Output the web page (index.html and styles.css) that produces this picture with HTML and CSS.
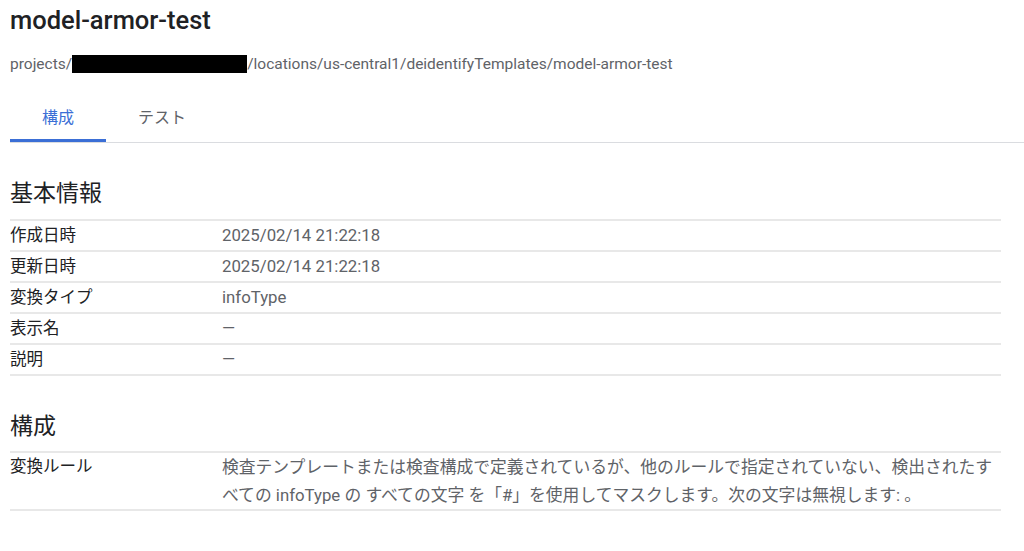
FILE: index.html
```html
<!DOCTYPE html>
<html lang="ja">
<head>
    <meta charset="UTF-8">
    <meta name="viewport" content="width=device-width, initial-scale=1.0">
    <title>model-armor-test</title>
    <link rel="stylesheet" href="styles.css">
</head>
<body>
    <div class="page">
        <h1 class="title">model-armor-test</h1>
        <div class="resource-path">projects/<span class="redacted"></span>/locations/us-central1/deidentifyTemplates/model-armor-test</div>

        <div class="tabs">
            <div class="tab active">構成</div>
            <div class="tab">テスト</div>
        </div>

        <section class="section">
            <h2 class="section-title">基本情報</h2>
            <div class="kv">
                <div class="kv-row"><div class="kv-label">作成日時</div><div class="kv-value">2025/02/14 21:22:18</div></div>
                <div class="kv-row"><div class="kv-label">更新日時</div><div class="kv-value">2025/02/14 21:22:18</div></div>
                <div class="kv-row"><div class="kv-label">変換タイプ</div><div class="kv-value">infoType</div></div>
                <div class="kv-row"><div class="kv-label">表示名</div><div class="kv-value">—</div></div>
                <div class="kv-row"><div class="kv-label">説明</div><div class="kv-value">—</div></div>
            </div>
        </section>

        <section class="section section-config">
            <h2 class="section-title">構成</h2>
            <div class="kv">
                <div class="kv-row kv-row-long">
                    <div class="kv-label">変換ルール</div>
                    <div class="kv-value rule-text">検査テンプレートまたは検査構成で定義されているが、他のルールで指定されていない、検出されたすべての infoType の すべての文字 を「#」を使用してマスクします。次の文字は無視します: 。</div>
                </div>
            </div>
        </section>
    </div>
</body>
</html>
```

FILE: styles.css
```css
body {
    margin: 0;
    background-color: #fff;
    font-family: Roboto, "Noto Sans CJK JP", sans-serif;
    color: #202124;
}
.page {
    padding-left: 10px;
}
.title {
    margin: 0;
    font-size: 25.5px;
    font-weight: 500;
    line-height: 40px;
    color: #202124;
}
.resource-path {
    margin-top: 12px;
    font-size: 15.5px;
    line-height: 24px;
    color: #5f6368;
}
.redacted {
    display: inline-block;
    width: 175px;
    height: 18px;
    background-color: #000;
    vertical-align: -4px;
}
.tabs {
    display: flex;
    margin-top: 18px;
    border-bottom: 1px solid #dadce0;
}
.tab {
    height: 48px;
    padding: 0 32px;
    font-size: 16px;
    line-height: 48px;
    color: #5f6368;
}
.tab.active {
    color: #3b6fd6;
    box-shadow: inset 0 -3px 0 #3b6fd6;
}
.section {
    margin-right: 23px;
}
.section-title {
    margin: 35px 0 9px;
    font-size: 23px;
    font-weight: 400;
    line-height: 32px;
    color: #202124;
}
.section-config .section-title {
    margin-top: 35px;
    margin-bottom: 8px;
}
.kv {
    border-top: 2px solid #e8e8e8;
}
.kv-row {
    display: grid;
    grid-template-columns: 212px 1fr;
    border-bottom: 2px solid #e8e8e8;
    font-size: 16.5px;
    line-height: 29px;
}
.kv-label {
    color: #202124;
}
.kv-value {
    font-size: 16.8px;
    color: #5f6368;
}
.kv-row-long {
    line-height: 28px;
}
.rule-text {
    padding-right: 4px;
}
```
